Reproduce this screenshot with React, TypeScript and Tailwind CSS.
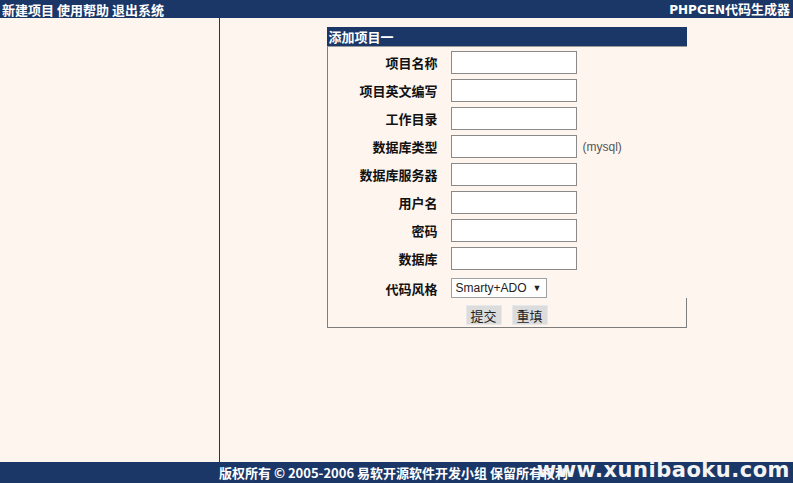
import React from "react";

const navy = "bg-[#1b3767]";

const fields = [
    "项目名称",
    "项目英文编写",
    "工作目录",
    "数据库类型",
    "数据库服务器",
    "用户名",
    "密码",
    "数据库",
];

const FieldRow = ({ label, hint }: { label: string; hint?: string }) => (
    <div className="flex items-center h-[23px]">
        <div className="w-[123px] pr-[13px] text-right font-bold text-[13px] text-[#111]">{label}</div>
        <div className="w-[126px] h-[23px] bg-white border border-[#8a8a8a]" />
        {hint && (
            <span className="ml-[6px] text-[12px] text-[#555] font-['Liberation_Sans',sans-serif]">{hint}</span>
        )}
    </div>
);

const App: React.FC = () => {
    return (
        <div className="h-[483px] flex flex-col bg-[#fef5ef] font-['Noto_Sans_CJK_SC',sans-serif] leading-none">
            <div className={`h-[18px] ${navy} flex items-center justify-between px-[2px] text-white font-bold text-[13px]`}>
                <span>新建项目 使用帮助 退出系统</span>
                <span className="pr-[1px]">
                    <span className="font-['DejaVu_Sans',sans-serif] text-[12px]">PHPGEN</span>代码生成器
                </span>
            </div>

            <div className="flex-1 flex">
                <div className="w-[220px] border-r border-[#1b3767]" />
                <div className="flex-1 flex justify-center pt-[9px]">
                    <div className="w-[360px] h-fit">
                        <div className={`h-[20px] ${navy} border-b border-[#9a9a9a] flex items-center px-[2px] text-white font-bold text-[13px]`}>
                            添加项目一
                        </div>
                        <div className="border-l border-b border-[#7d7d7d] flex flex-col pt-[4px]">
                            <div className="flex flex-col gap-[5px]">
                                {fields.map((f) => (
                                    <FieldRow key={f} label={f} hint={f === "数据库类型" ? "(mysql)" : undefined} />
                                ))}
                            </div>
                            <div className="flex items-center mt-[8px] h-[20px]">
                                <div className="w-[123px] pr-[13px] text-right font-bold text-[13px] text-[#111]">代码风格</div>
                                <div className="w-[96px] h-[20px] bg-white border border-[#a0a0a0] flex items-center justify-between px-[4px] text-[12px] text-[#222] font-['Liberation_Sans',sans-serif]">
                                    <span>Smarty+ADO</span>
                                    <span className="text-[9px]">▼</span>
                                </div>
                            </div>
                            <div className="flex justify-center gap-[10px] pt-[7px] pb-[2px] border-r border-[#7d7d7d] -mr-0">
                                <button className="w-[36px] h-[20px] bg-[#dcdcdc] border border-[#e8e8e8] text-[13px] text-[#222]">提交</button>
                                <button className="w-[36px] h-[20px] bg-[#dcdcdc] border border-[#e8e8e8] text-[13px] text-[#222]">重填</button>
                            </div>
                        </div>
                    </div>
                </div>
            </div>

            <div className={`relative h-[21px] ${navy} flex items-center pl-[219px] text-white font-bold text-[13px]`}>
                <span>版权所有 © 2005-2006 易软开源软件开发小组 保留所有权利</span>
                <span className="absolute right-[3px] top-[-2px] text-[21px] font-bold text-[#f4f4f4] font-['DejaVu_Sans',sans-serif] tracking-[0.5px]">
                    www.xunibaoku.com
                </span>
            </div>
        </div>
    );
};

export default App;
